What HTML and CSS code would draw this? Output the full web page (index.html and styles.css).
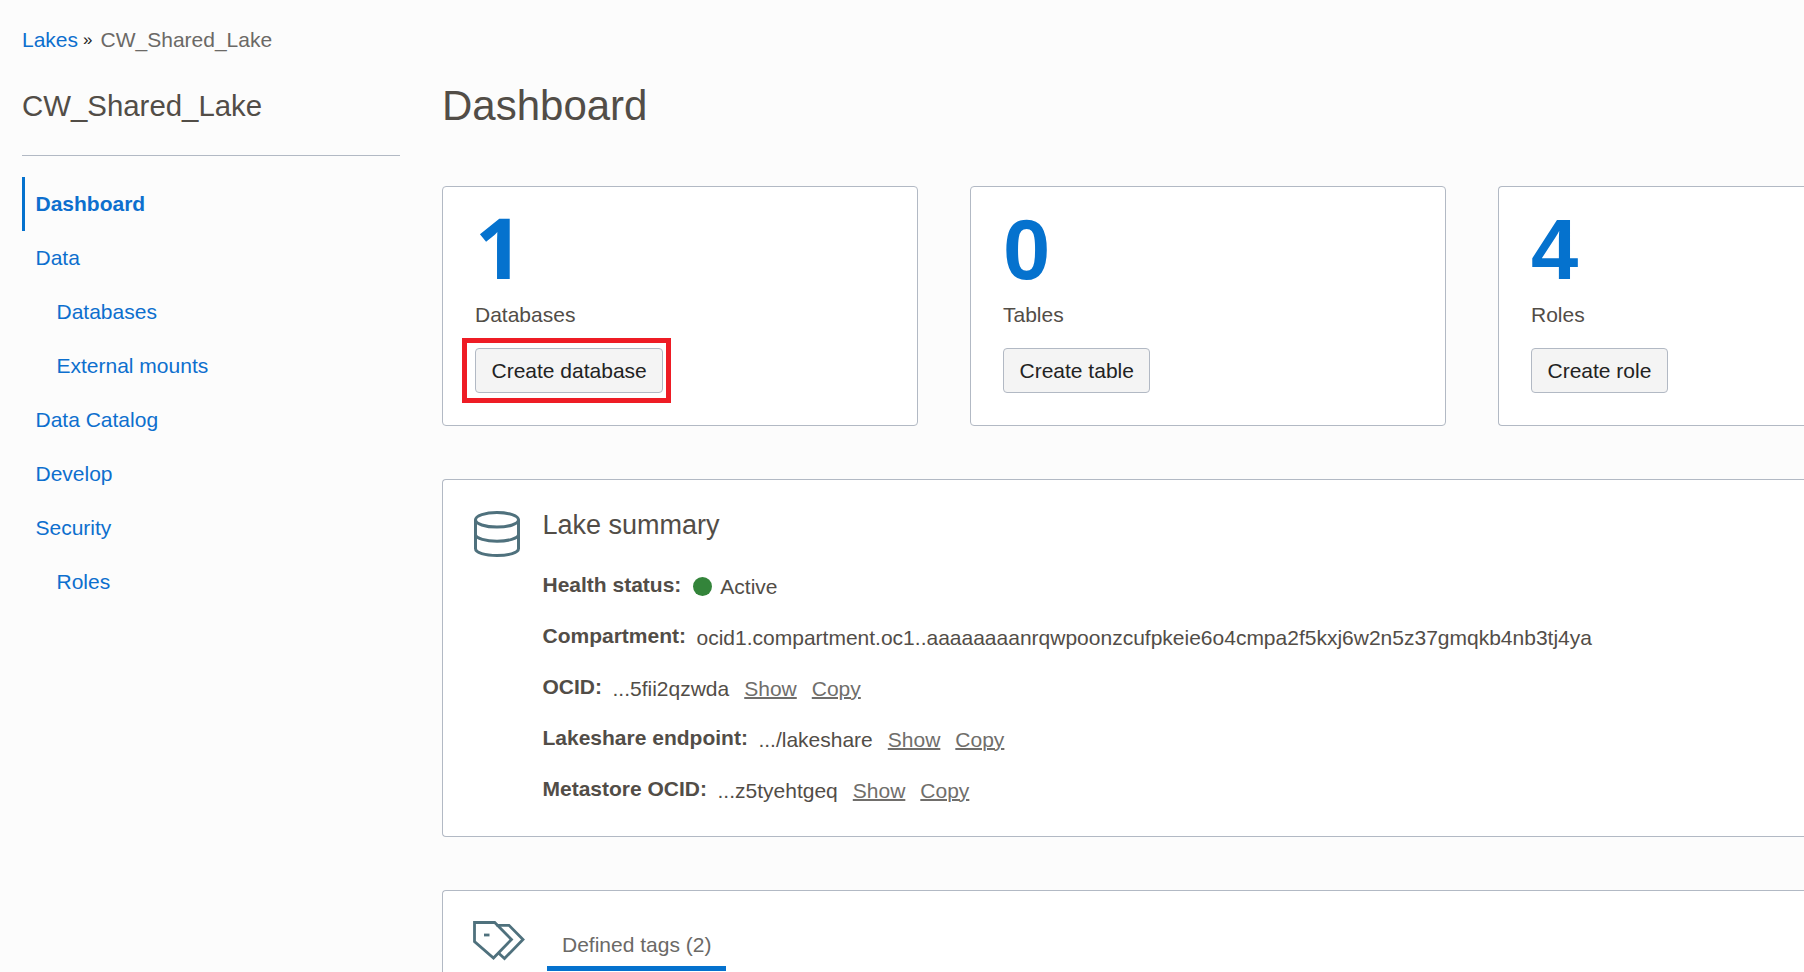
FILE: index.html
```html
<!DOCTYPE html>
<html lang="en">
<head>
<meta charset="utf-8">
<title>CW_Shared_Lake - Dashboard</title>
<link rel="stylesheet" href="styles.css">
</head>
<body>
<nav class="breadcrumb"><a href="#">Lakes</a><span class="sep">»</span><span class="here">CW_Shared_Lake</span></nav>
<div class="layout">
  <aside class="sidebar">
    <h2 class="lake-name">CW_Shared_Lake</h2>
    <ul class="menu">
      <li><a class="item active" href="#">Dashboard</a></li>
      <li><a class="item" href="#">Data</a></li>
      <li><a class="item sub" href="#">Databases</a></li>
      <li><a class="item sub" href="#">External mounts</a></li>
      <li><a class="item" href="#">Data Catalog</a></li>
      <li><a class="item" href="#">Develop</a></li>
      <li><a class="item" href="#">Security</a></li>
      <li><a class="item sub" href="#">Roles</a></li>
    </ul>
  </aside>
  <main class="content">
    <h1 class="page-title">Dashboard</h1>
    <section class="stats">
      <div class="card stat">
        <div class="number"><span class="one">1</span></div>
        <div class="label">Databases</div>
        <div class="action"><button class="btn">Create database</button><span class="highlight"></span></div>
      </div>
      <div class="card stat">
        <div class="number">0</div>
        <div class="label">Tables</div>
        <div class="action"><button class="btn">Create table</button></div>
      </div>
      <div class="card stat bleed">
        <div class="number">4</div>
        <div class="label">Roles</div>
        <div class="action"><button class="btn">Create role</button></div>
      </div>
    </section>
    <section class="card summary bleed">
      <svg class="db-icon" width="46" height="46" viewBox="0 0 46 46" fill="none" stroke="#4f717d" stroke-width="3">
        <ellipse cx="23" cy="8.800" rx="21.500" ry="7.300"/>
        <path d="M1.500 8.800V37.500C1.500 41.800 11 44.500 23 44.500S44.500 41.800 44.500 37.500V8.800"/>
        <path d="M1.500 24C2.500 27.500 11.500 30.200 23 30.200S43.500 27.500 44.500 24"/>
      </svg>
      <div class="details">
        <h3 class="summary-title">Lake summary</h3>
        <div class="row"><strong>Health status:</strong><span class="value status"><i class="dot"></i>Active</span></div>
        <div class="row"><strong>Compartment:</strong><span class="value">ocid1.compartment.oc1..aaaaaaaanrqwpoonzcufpkeie6o4cmpa2f5kxj6w2n5z37gmqkb4nb3tj4ya</span></div>
        <div class="row"><strong>OCID:</strong><span class="value">...5fii2qzwda</span><a class="link" href="#">Show</a><a class="link" href="#">Copy</a></div>
        <div class="row"><strong>Lakeshare endpoint:</strong><span class="value">.../lakeshare</span><a class="link" href="#">Show</a><a class="link" href="#">Copy</a></div>
        <div class="row"><strong>Metastore OCID:</strong><span class="value">...z5tyehtgeq</span><a class="link" href="#">Show</a><a class="link" href="#">Copy</a></div>
      </div>
    </section>
    <section class="card tags bleed">
      <svg class="tag-icon" width="52" height="42" viewBox="0 0 52 42" fill="none" stroke="#4f717d" stroke-width="2.8">
        <path d="M1.500 2.500H21.700L38.500 19.500L20.500 38L1.500 21.500Z"/>
        <path d="M23.500 5.300H36L50 19.500L31.500 38.500L25.500 33"/>
        <path d="M11 15H16.500"/>
      </svg>
      <div class="tab">Defined tags (2)</div>
    </section>
  </main>
</div>
</body>
</html>
```
FILE: styles.css
```css
* { box-sizing: border-box; }
html, body { height: 972px; overflow: hidden; }
body {
  margin: 0;
  padding: 27px 0 0 22px;
  background: #fcfcfc;
  color: #524d47;
  font: 21px/26px "Liberation Sans", Arial, sans-serif;
}
a { color: #0d6fce; text-decoration: none; }
h1, h2, h3, ul { margin: 0; padding: 0; font-weight: 400; }
.breadcrumb { display: flex; height: 26px; }
.sep { width: 22.500px; padding-left: 5px; font-size: 17px; color: #222; }
.here { color: #6b6966; }
.layout { display: flex; gap: 42px; }
.sidebar { flex: 0 0 378px; padding-top: 36px; }
.lake-name {
  height: 67px;
  border-bottom: 1px solid #b2b9c4;
  font-size: 29.4px;
  line-height: 34px;
}
.menu { margin-top: 21px; list-style: none; }
.item { display: block; height: 54px; padding-left: 13.5px; line-height: 54px; }
.item.sub { padding-left: 34.5px; }
.item.active { padding-left: 10.5px; border-left: 3px solid #0572ce; font-weight: 700; }
.content { flex: 1; min-width: 0; padding-top: 28px; }
.page-title { height: 105px; font-size: 42px; line-height: 50px; }
.card { background: #fff; border: 1px solid #b2b9c4; border-radius: 4px; }
.stats { display: flex; gap: 52px; }
.stat { flex: 0 0 476px; height: 240px; padding: 21px 32px; }
.card.bleed { flex: 1; border-right: 0; border-radius: 4px 0 0 4px; }
.number { height: 84px; font-size: 85px; line-height: 84px; font-weight: 700; color: #0572ce; }
.one { font-family: "Open Sans", sans-serif; font-size: 84px; line-height: 0; }
.label { margin-top: 10px; }
.action { position: relative; width: max-content; margin-top: 20px; }
.btn {
  display: block;
  height: 45px;
  padding: 0 15.5px;
  border: 1px solid #b2b9c4;
  border-radius: 4px;
  background: #f4f4f4;
  color: #222;
  font: inherit;
}
.highlight { position: absolute; inset: -10px -8px -10px -13px; border: 5px solid #ee1c25; }
.summary { display: flex; height: 358px; margin-top: 53px; padding: 29px 31px; }
.db-icon { flex: none; margin-top: 2px; }
.details { margin-left: 22.5px; }
.summary-title { height: 50px; font-size: 27px; line-height: 32px; }
.row { display: flex; height: 51px; line-height: 51px; white-space: nowrap; }
.value { margin: 2px 0 0 10.5px; }
.status { display: flex; align-items: center; height: 51px; }
.dot { width: 19px; height: 19px; margin: 0 8.5px 0 1px; border-radius: 50%; background: #33843a; }
.link { margin: 2px 0 0 15px; color: #706e6b; text-decoration: underline 2px; }
.card.tags { display: flex; height: 82px; margin-top: 53px; padding: 29px 0 0 30px; border-bottom: 0; border-radius: 4px 0 0 0; }
.tag-icon { flex: none; }
.tab {
  height: 51px;
  margin-left: 22px;
  padding: 12px 15px 0;
  border-bottom: 5px solid #0572ce;
  color: #6b6966;
}
```
